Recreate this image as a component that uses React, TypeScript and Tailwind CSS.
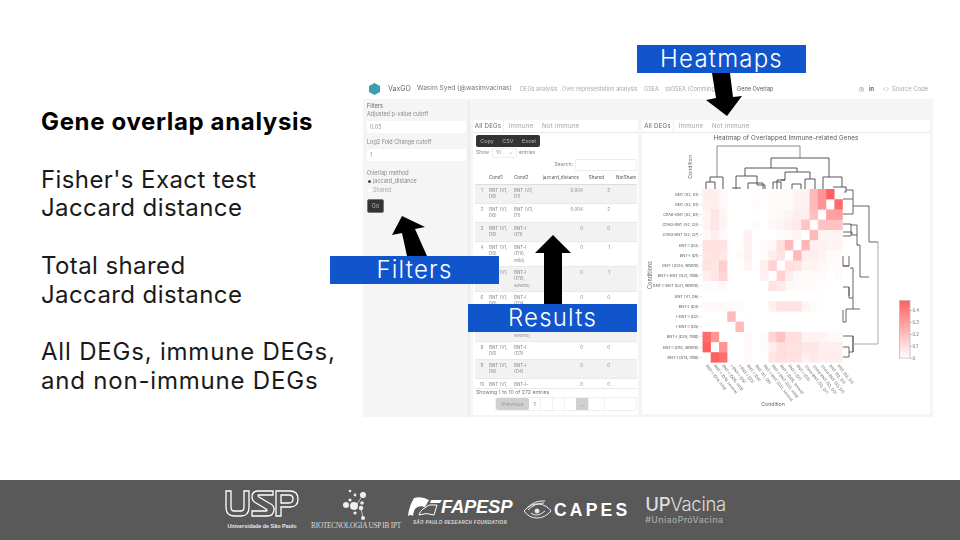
import React from 'react';
import { Code, Instagram } from 'lucide-react';

const BLUE = 'bg-[#1155cc]';
const F = "[font-family:Inter,'Liberation_Sans',sans-serif]";

const ROWS_TABLE = [
  { n: 1, a: ['BNT (V1,', 'D6)'], b: ['BNT (V2,', 'D1)'], j: '0.004', s: '2', h: 'h-[19px]', odd: true },
  { n: 2, a: ['BNT (V1,', 'D6)'], b: ['BNT (V3,', 'D1)'], j: '0.004', s: '2', h: 'h-[19px]', odd: false },
  { n: 3, a: ['BNT (V1,', 'D6)'], b: ['BNT-I', '(D1)'], j: '0', s: '0', h: 'h-[19px]', odd: true },
  { n: 4, a: ['BNT (V1,', 'D6)'], b: ['BNT-I', '(D10,', 'mild)'], j: '0', s: '1', h: 'h-[25px]', odd: false },
  { n: 5, a: ['BNT (V1,', 'D6)'], b: ['BNT-I', '(D10,', 'severe)'], j: '0', s: '1', h: 'h-[25px]', odd: true },
  { n: 6, a: ['BNT (V1,', 'D6)'], b: ['BNT-I', '(D14,', 'mild)'], j: '0', s: '0', h: 'h-[25px]', odd: false },
  { n: 7, a: ['BNT (V1,', 'D6)'], b: ['BNT-I', '(D28,', 'severe)'], j: '0', s: '0', h: 'h-[25px]', odd: true },
  { n: 8, a: ['BNT (V1,', 'D6)'], b: ['BNT-I', '(D3)'], j: '0', s: '0', h: 'h-[18px]', odd: false },
  { n: 9, a: ['BNT (V1,', 'D6)'], b: ['BNT-I', '(D4)'], j: '0', s: '0', h: 'h-[19px]', odd: true },
  { n: 10, a: ['BNT (V1,'], b: ['BNT-I-'], j: '0', s: '0', h: 'h-[10px]', odd: false },
];

// overlap values read off the chart, top row first
const HEAT: number[][] = [
  [.05, .05, .02, 0, 0, 0, .005, .005, .01, .01, .01, .03, .04, .2, .3, .45, 0],
  [.05, .05, .02, 0, 0, 0, .01, 0, .01, .01, .01, .03, .04, .2, .3, 0, .42],
  [.03, .07, .03, 0, 0, 0, 0, 0, .01, .02, .03, .05, .05, .18, 0, .27, .27],
  [.03, .07, .03, 0, 0, 0, .01, 0, .02, .03, .05, .06, .17, 0, .17, .17, .17],
  [.02, .05, .02, 0, 0, .04, 0, 0, 0, .01, .02, .03, 0, .2, .03, .03, .03],
  [.08, .08, .08, 0, 0, .04, 0, .01, .02, .09, .2, 0, .2, .04, .04, .03, .03],
  [.07, .08, .06, 0, .01, .04, 0, .01, .05, .08, 0, .2, .05, .05, .03, .01, .01],
  [.08, .07, .14, 0, 0, .03, 0, .05, .13, 0, .09, .08, .03, .03, .02, .01, .01],
  [.05, .07, .12, 0, 0, 0, 0, .04, 0, .13, .05, .02, .01, .01, .01, 0, .01],
  [.01, .01, .02, 0, 0, 0, 0, 0, .08, .06, .02, .01, .01, .01, .005, 0, 0],
  [0, 0, 0, 0, 0, 0, 0, 0, 0, 0, 0, 0, 0, 0, 0, 0, 0],
  [.02, .02, .02, .01, .01, 0, 0, 0, .05, .08, .08, .08, .03, .01, .005, 0, 0],
  [0, 0, 0, .2, 0, .005, 0, 0, 0, 0, 0, 0, 0, 0, 0, 0, 0],
  [0, 0, 0, 0, .2, .005, 0, 0, 0, 0, 0, 0, 0, 0, 0, 0, 0],
  [.42, .3, 0, 0, 0, .015, 0, .01, .12, .17, .09, .09, .03, .03, .03, .015, .015],
  [.45, 0, .3, 0, 0, .015, 0, .01, .05, .09, .08, .08, .07, .07, .05, .05, .05],
  [0, .45, .4, 0, 0, .015, 0, .005, .07, .09, .08, .08, .04, .06, .05, .05, .05],
];

const ROW_LABELS = [
  'BNT (S2, D1)', 'BNT (S2, D1)', 'ChAd-BNT (S2, D1)', 'ChAd-BNT (S2, D3)', 'ChAd-BNT (S2, D7)',
  'BNT-I (D3)', 'BNT-I (D1)', 'BNT-I (D28, severe)', 'BNT-I-BNT (D31, mild)', 'BNT-I-BNT (D31, severe)',
  'BNT (V1, D6)', 'BNT-I (D4)', 'I-BNT-I (D2)', 'I-BNT-I (D5)', 'BNT-I (D28, mild)', 'BNT-I (D10, severe)', 'BNT-I (D14, mild)',
];

const X0 = 702.5;
const Y0 = 189;
const CW = 8.24;
const CH = 10.2;

// dendrogram paths, page coordinates
const TREE_TOP = [
  'M771 168V158H829V177',
  'M745 176V168H797V172',
  'M736 189V176H757V183',
  'M732 188H741',
  'M748 189V183H763V189M757 183V185H765V189',
  'M785 176V172H810V179',
  'M777 189V180H785V176M785 180H781',
  'M773 189V182H781V189',
  'M792 189V184H801V189',
  'M805 189V179H815V189',
  'M823 189V177H842V187',
  'M833 187H846V192H844',
];
const TREE_SIDE = [
  'M878 242H869V206H853V190H846',
  'M853 199H843M853 214H843M853 206V214',
  'M869 277H860V245H857V225H851V224H843M851 224V236H843',
  'M857 235H852V232H843M857 245H858',
  'M860 309H853V298H849V287H843M849 287V296M849 266H843M849 256V266H843V256M853 298V268H850',
  'M853 309H846V322H843V310',
  'M843 336H853V352H849M849 347H843M849 347V357H843',
  'M853 336V352',
];

const Heatmap: React.FC = () => (
  <svg viewBox="642 132 288 282" className="w-[288px] h-[282px] block">
    <g className={F}>
      <text x="786" y="140" textAnchor="middle" fontSize="6.2" fill="#555" letterSpacing=".15">Heatmap of Overlapped Immune-related Genes</text>
      <text x="0" y="0" transform="translate(692 167) rotate(-90)" textAnchor="middle" fontSize="5.2" fill="#666">Condition</text>
      <text x="0" y="0" transform="translate(651.5 275) rotate(-90)" textAnchor="middle" fontSize="5.5" fill="#666">Conditions</text>
      <text x="773" y="406" textAnchor="middle" fontSize="5.2" fill="#666">Condition</text>
      {HEAT.map((row, r) =>
        row.map((v, c) => (
          <rect key={`${r}-${c}`} x={X0 + c * CW} y={Y0 + r * CH} width={CW + 0.2} height={CH + 0.2} fill="#ff6060" fillOpacity={Math.min(1, v / 0.45)} />
        )),
      )}
      {ROW_LABELS.map((l, r) => (
        <text key={r} x={X0 - 1} y={Y0 + r * CH + 6.6} textAnchor="end" fontSize="3.9" fill="#555">{l} -</text>
      ))}
      {[...ROW_LABELS].reverse().map((l, c) => (
        <text key={c} x="0" y="0" transform={`translate(${X0 + c * CW + 3} 366) rotate(52)`} fontSize="3.9" fill="#666">{l}</text>
      ))}
      <path d="M717 177V146H800V158" fill="none" stroke="#8a8a8a" strokeWidth="1" />
      <path d="M710 182V177H723V189M706 189V182H715V189" fill="none" stroke="#555" strokeWidth="1" />
      {TREE_TOP.map((d, i) => <path key={i} d={d} fill="none" stroke="#444" strokeWidth="0.9" />)}
      {TREE_SIDE.map((d, i) => <path key={i} d={d} fill="none" stroke="#555" strokeWidth="0.9" />)}
      <path d="M853 344H878V242" fill="none" stroke="#aaa" strokeWidth="1" />
      <defs>
        <linearGradient id="cbar" x1="0" y1="0" x2="0" y2="1">
          <stop offset="0" stopColor="#ff6060" />
          <stop offset="1" stopColor="#ffffff" />
        </linearGradient>
      </defs>
      <rect x="899.5" y="300.5" width="10.5" height="57.5" fill="url(#cbar)" stroke="#bbb" strokeWidth="0.8" />
      {[['0.4', 310.5], ['0.3', 322.5], ['0.2', 334.5], ['0.1', 346.5], ['0', 358.5]].map(([t, y]) => (
        <g key={t as string}>
          <path d={`M910 ${y}H912`} stroke="#999" strokeWidth=".5" />
          <text x="912.5" y={(y as number) + 1.6} fontSize="4.3" fill="#666">{t}</text>
        </g>
      ))}
    </g>
  </svg>
);

const Tabs: React.FC<{ w1: string }> = ({ w1 }) => (
  <div className="flex items-center h-[13px] border-b border-[#e8e8e8] text-[6.2px] tracking-[0.2px] text-[#a5a5a5] shrink-0">
    <span className={`${w1} text-[#666] h-full flex items-center justify-center border-r border-[#eee]`}>All DEGs</span>
    <span className="w-[34px] text-center">Immune</span>
    <span className="pl-[4px]">Not immune</span>
  </div>
);

const Sidebar: React.FC = () => (
  <aside className="w-[107px] h-full border-r-2 border-[#ececec] pl-[4px] pr-[3px] pt-[2px] text-[5.5px] text-[#888] shrink-0">
    <div className="text-[#666] leading-[7px]">Filters</div>
    <div className="leading-[8px]">Adjusted p-value cutoff</div>
    <div className="mt-[3px] h-[12px] w-[99px] bg-white rounded-[2px] flex items-center px-[3px] text-[#999]">0.05</div>
    <div className="mt-[5px] leading-[8px]">Log2 Fold Change cutoff</div>
    <div className="mt-[3px] h-[12px] w-[99px] bg-white rounded-[2px] flex items-center px-[3px] text-[#999]">1</div>
    <div className="mt-[8px] leading-[8px]">Overlap method</div>
    <div className="flex items-center gap-[2px] h-[9px]">
      <span className="w-[3px] h-[3px] rounded-full bg-[#444] ml-[1px]" />
      <span>jaccard_distance</span>
    </div>
    <div className="flex items-center gap-[2px] h-[9px] text-[#aaa]">
      <span className="w-[3px] h-[3px] rounded-full bg-white ml-[1px]" />
      <span>Shared</span>
    </div>
    <div className="mt-[4px] w-[17px] h-[14px] rounded-[2px] bg-[#333] border border-[#777] text-[#bbb] flex items-center justify-center">Go</div>
  </aside>
);

const ResultsCard: React.FC = () => (
  <section className="w-[165px] h-[295px] bg-white flex flex-col overflow-hidden shrink-0">
    <Tabs w1="w-[31px]" />
    <div className="mt-[2px] ml-[3px] w-[64px] h-[12px] bg-[#333] rounded-[2px] flex items-center justify-around text-[5.4px] text-[#bbb]">
      <span>Copy</span><span>CSV</span><span>Excel</span>
    </div>
    <div className="mt-[1px] ml-[3px] flex items-center gap-[1px] text-[5px] text-[#888] h-[10px] whitespace-nowrap">
      <span className="w-[15px]">Show</span>
      <span className="w-[25px] border border-[#eee] rounded-[1px] px-[3px] text-[#999] flex justify-between"><span>10</span><span>⌄</span></span>
      <span className="ml-[1px]">entries</span>
    </div>
    <div className="flex justify-end items-center gap-[2px] h-[13px] pr-[1px] text-[5.2px] text-[#888]">
      <span>Search:</span>
      <span className="w-[62px] h-[12px] border border-[#eee] rounded-[2px]" />
    </div>
    <div className="flex items-center h-[12px] text-[4.6px] text-[#555] mt-[1px] whitespace-nowrap">
      <span className="w-[16px]" />
      <span className="w-[25px]">Cond1</span>
      <span className="w-[27px]">Cond2</span>
      <span className="w-[40px] text-center">jaccard_distance</span>
      <span className="w-[31px] text-center">Shared</span>
      <span className="pl-[4px]">NotShare</span>
    </div>
    <div className="ml-[2px] mr-[1px] overflow-hidden border-t border-[#ddd]">
      {ROWS_TABLE.map((r) => (
        <div key={r.n} className={`flex items-start ${r.h} pt-[3px] overflow-hidden border-b border-[#e9e9e9] text-[4.5px] leading-[6.3px] text-[#888] ${r.odd ? 'bg-[#f2f2f2]' : 'bg-white'}`}>
          <span className="w-[14px] text-center">{r.n}</span>
          <span className="w-[25px]">{r.a.map((t) => <div key={t}>{t}</div>)}</span>
          <span className="w-[28px]">{r.b.map((t) => <div key={t}>{t}</div>)}</span>
          <span className="w-[41px] text-right">{r.j}</span>
          <span className="w-[27px] text-right">{r.s}</span>
        </div>
      ))}
    </div>
    <div className="ml-[3px] h-[8px] text-[5.2px] text-[#777] flex items-center">Showing 1 to 10 of 272 entries</div>
    <div className="ml-[22px] mr-[1px] h-[14px] flex items-center border border-[#f0f0f0] rounded-[2px] text-[5.4px] text-[#999]">
      <span className="w-[33px] h-full bg-[#d0d0d0] rounded-[2px] flex items-center justify-center">Previous</span>
      <span className="w-[11px] text-center text-[#777]">1</span>
      <span className="w-[12px] h-full border-l border-[#f0f0f0]" />
      <span className="w-[12px] h-full border-l border-[#f0f0f0]" />
      <span className="w-[12px] h-full border-l border-[#f0f0f0]" />
      <span className="w-[12px] h-full bg-[#d0d0d0] flex items-center justify-center">...</span>
      <span className="w-[16px] h-full border-l border-[#f0f0f0]" />
      <span className="flex-1 h-full border-l border-[#f0f0f0]" />
    </div>
  </section>
);

const AppShot: React.FC = () => (
  <div className={`${F} w-[570px] h-[342px] mt-[75px] flex flex-col blur-[0.45px] shrink-0`}>
    <header className="h-[24px] pt-[4px] flex items-center bg-white text-[5.6px] text-[#aaa] whitespace-nowrap shrink-0">
      <span className="ml-[6px] w-[11px] h-[12px] bg-[#3d9db0] [clip-path:polygon(50%_0,100%_25%,100%_75%,50%_100%,0_75%,0_25%)]" />
      <span className="ml-[8px] text-[7px] text-[#666] w-[29px]">VaxGO</span>
      <span className="text-[6.6px] text-[#777] w-[103px]">Wasim Syed (@wasimvacinas)</span>
      <span className="w-[42px]">DEGs analysis</span>
      <span className="w-[82px]">Over representation analysis</span>
      <span className="w-[21px]">GSEA</span>
      <span className="w-[72px]">ssGSEA (Comming soon)</span>
      <span className="w-[122px] text-[#555]">Gene Overlap</span>
      <Instagram size={5} className="text-[#888]" />
      <span className="ml-[5px] font-bold text-[#666]">in</span>
      <Code size={6} className="ml-[9px] text-[#888]" />
      <span className="ml-[3px] text-[5.9px]">Source Code</span>
    </header>
    <div className="flex-1 flex bg-[#f5f5f5] pt-[2px] min-h-0">
      <Sidebar />
      <div className="flex gap-[4px] pl-[3px] pt-[19px]">
        <ResultsCard />
        <section className="w-[288px] h-[294px] bg-white flex flex-col overflow-hidden">
          <Tabs w1="w-[32px]" />
          <div className="mt-[-1px]"><Heatmap /></div>
        </section>
      </div>
    </div>
  </div>
);

const Label: React.FC<{ className: string; children: string }> = ({ className, children }) => (
  <div className={`absolute ${className} w-[169px] h-[28px] ${BLUE} text-white text-[24px] font-light leading-[28px] text-center tracking-[1.2px] ${F}`}>{children}</div>
);

const Annotations: React.FC = () => (
  <>
    <svg viewBox="0 0 960 480" className="absolute inset-0 w-[960px] h-[480px] pointer-events-none">
      <polygon points="712,73 730,73 733,97 742,96 727,116 706,100 716,98" fill="#000" />
      <polygon points="402,216 425,227 415,229 427,256 407,256 402,233 392,235" fill="#000" />
      <polygon points="553,235 571,253 562,253 562,305 544,305 544,253 535,253" fill="#000" />
    </svg>
    <Label className="left-[637px] top-[45px]">Heatmaps</Label>
    <Label className="left-[330px] top-[256px]">Filters</Label>
    <Label className="left-[468px] top-[304px]">Results</Label>
  </>
);

const SlideText: React.FC = () => (
  <div className={`${F} w-[363px] pl-[41px] pt-[108px] text-[24px] leading-[28.8px] text-[#1a1a1a] shrink-0 whitespace-nowrap tracking-[0.4px]`}>
    <div className="font-bold tracking-[0.65px] text-black">Gene overlap analysis</div>
    <div className="mt-[28.8px]">Fisher's Exact test</div>
    <div>Jaccard distance</div>
    <div className="mt-[28.8px]">Total shared</div>
    <div>Jaccard distance</div>
    <div className="mt-[28.8px] tracking-[0.8px]">All DEGs, immune DEGs,</div>
    <div className="tracking-[0.8px]">and non-immune DEGs</div>
  </div>
);

const UspLogo: React.FC = () => (
  <div className="w-[74px] flex flex-col items-center mt-[1px]">
    <svg viewBox="0 0 74 27" className="w-[74px] h-[27px]">
      <g fill="none" stroke="#fff" strokeWidth="1.3">
        <path d="M1 1V17Q1 26 9 26H16Q24 26 24 17V1H19V17Q19 21 16 21H9Q6 21 6 17V1Z" />
        <path d="M48 1H33Q27 1 27 7Q27 11 31 13L41 19Q43 21 41 21H27V26H42Q49 26 49 19Q49 15 44 13L34 7Q32 5 34 5H48Z" />
        <path d="M51 1H65Q73 1 73 9Q73 17 65 17H56V26H51Z" />
        <path d="M56 5H64Q68 5 68 9Q68 13 64 13H56Z" />
      </g>
    </svg>
    <span className="mt-[5px] text-[5.4px] font-bold text-[#e8e8e8] whitespace-nowrap [font-family:'Liberation_Sans',sans-serif]">Universidade de São Paulo</span>
  </div>
);

const BioLogo: React.FC = () => (
  <div className="w-[92px] flex flex-col items-center">
    <svg viewBox="0 0 30 32" className="w-[30px] h-[32px]">
      <g fill="#eee">
        <circle cx="22" cy="6" r="3" />
        <circle cx="9" cy="2" r="1.3" />
        <circle cx="14" cy="6" r="1.4" />
        <circle cx="9" cy="11" r="1.6" />
        <circle cx="5" cy="16" r="3" />
        <circle cx="13" cy="17" r="4" />
        <circle cx="21" cy="14" r="1.8" />
        <circle cx="20" cy="19" r="2.2" />
        <circle cx="14" cy="24" r="1.6" />
        <circle cx="22" cy="29" r="2" />
        <path d="M22 6L16 15M20 19L22 29" stroke="#eee" strokeWidth=".7" />
      </g>
    </svg>
    <span className="text-[7.2px] text-[#ddd] whitespace-nowrap tracking-[-0.2px] [font-family:'Liberation_Serif',serif]">BIOTECNOLOGIA USP IB IPT</span>
  </div>
);

const FapespLogo: React.FC = () => (
  <div className="w-[106px] flex flex-col items-start [font-family:'Liberation_Sans',sans-serif]">
    <div className="flex items-center h-[26px]">
      <svg viewBox="0 0 34 20" className="w-[34px] h-[20px]">
        <path d="M0 19Q1 9 6 1Q14 -1 21 3L17 10Q10 8 7 12Q5 15 5 19Q3 17 0 19Z" fill="#fff" />
        <path d="M23 3L34 3L32 6L22 6Z" fill="#fff" />
        <path d="M11 18Q12 14 15 12L21 8H29L26 18Q18 15 11 18Z" fill="none" stroke="#fff" strokeWidth="1" />
      </svg>
      <span className="ml-[-1px] text-[18.5px] font-bold italic text-white leading-none tracking-[-0.3px]">FAPESP</span>
    </div>
    <span className="ml-[5px] text-[4.5px] italic font-bold text-[#ddd] whitespace-nowrap tracking-[0.35px]">SÃO PAULO RESEARCH FOUNDATION</span>
  </div>
);

const CapesLogo: React.FC = () => (
  <div className="flex items-center [font-family:'Liberation_Sans',sans-serif]">
    <svg viewBox="0 0 29 20" className="w-[29px] h-[20px]">
      <g fill="none" stroke="#eee" strokeWidth="1">
        <path d="M1 11Q8 3 16 4Q24 5 28 11Q22 18 14 18Q6 18 1 11Z" />
        <path d="M5 10Q12 3 21 3" />
        <path d="M4 8Q12 0 22 1" />
        <circle cx="14" cy="11" r="2" fill="#eee" />
        <path d="M8 13Q14 18 22 11" />
      </g>
    </svg>
    <span className="ml-[2px] text-[17.5px] font-bold text-white tracking-[3.2px]">CAPES</span>
  </div>
);

const UpLogo: React.FC = () => (
  <div className={`${F} flex flex-col items-start text-[#ddd] leading-none`}>
    <span className="text-[18.5px] whitespace-nowrap tracking-[-0.3px]"><span className="font-medium">UP</span><span className="font-light">Vacina</span></span>
    <span className="mt-[3px] text-[8.8px] font-medium text-[#aaa] whitespace-nowrap tracking-[0.4px]">#UniaoPróVacina</span>
  </div>
);

const App: React.FC = () => (
  <div className="w-[960px] h-[540px] flex flex-col overflow-hidden bg-white">
    <main className="relative h-[480px] flex shrink-0">
      <SlideText />
      <AppShot />
      <Annotations />
    </main>
    <footer className="h-[60px] bg-[#595959] flex items-center pl-[225px] shrink-0">
      <UspLogo />
      <div className="ml-[11px]"><BioLogo /></div>
      <div className="ml-[6px] mt-[1px]"><FapespLogo /></div>
      <div className="ml-[9px]"><CapesLogo /></div>
      <div className="ml-[15px]"><UpLogo /></div>
    </footer>
  </div>
);

export default App;
